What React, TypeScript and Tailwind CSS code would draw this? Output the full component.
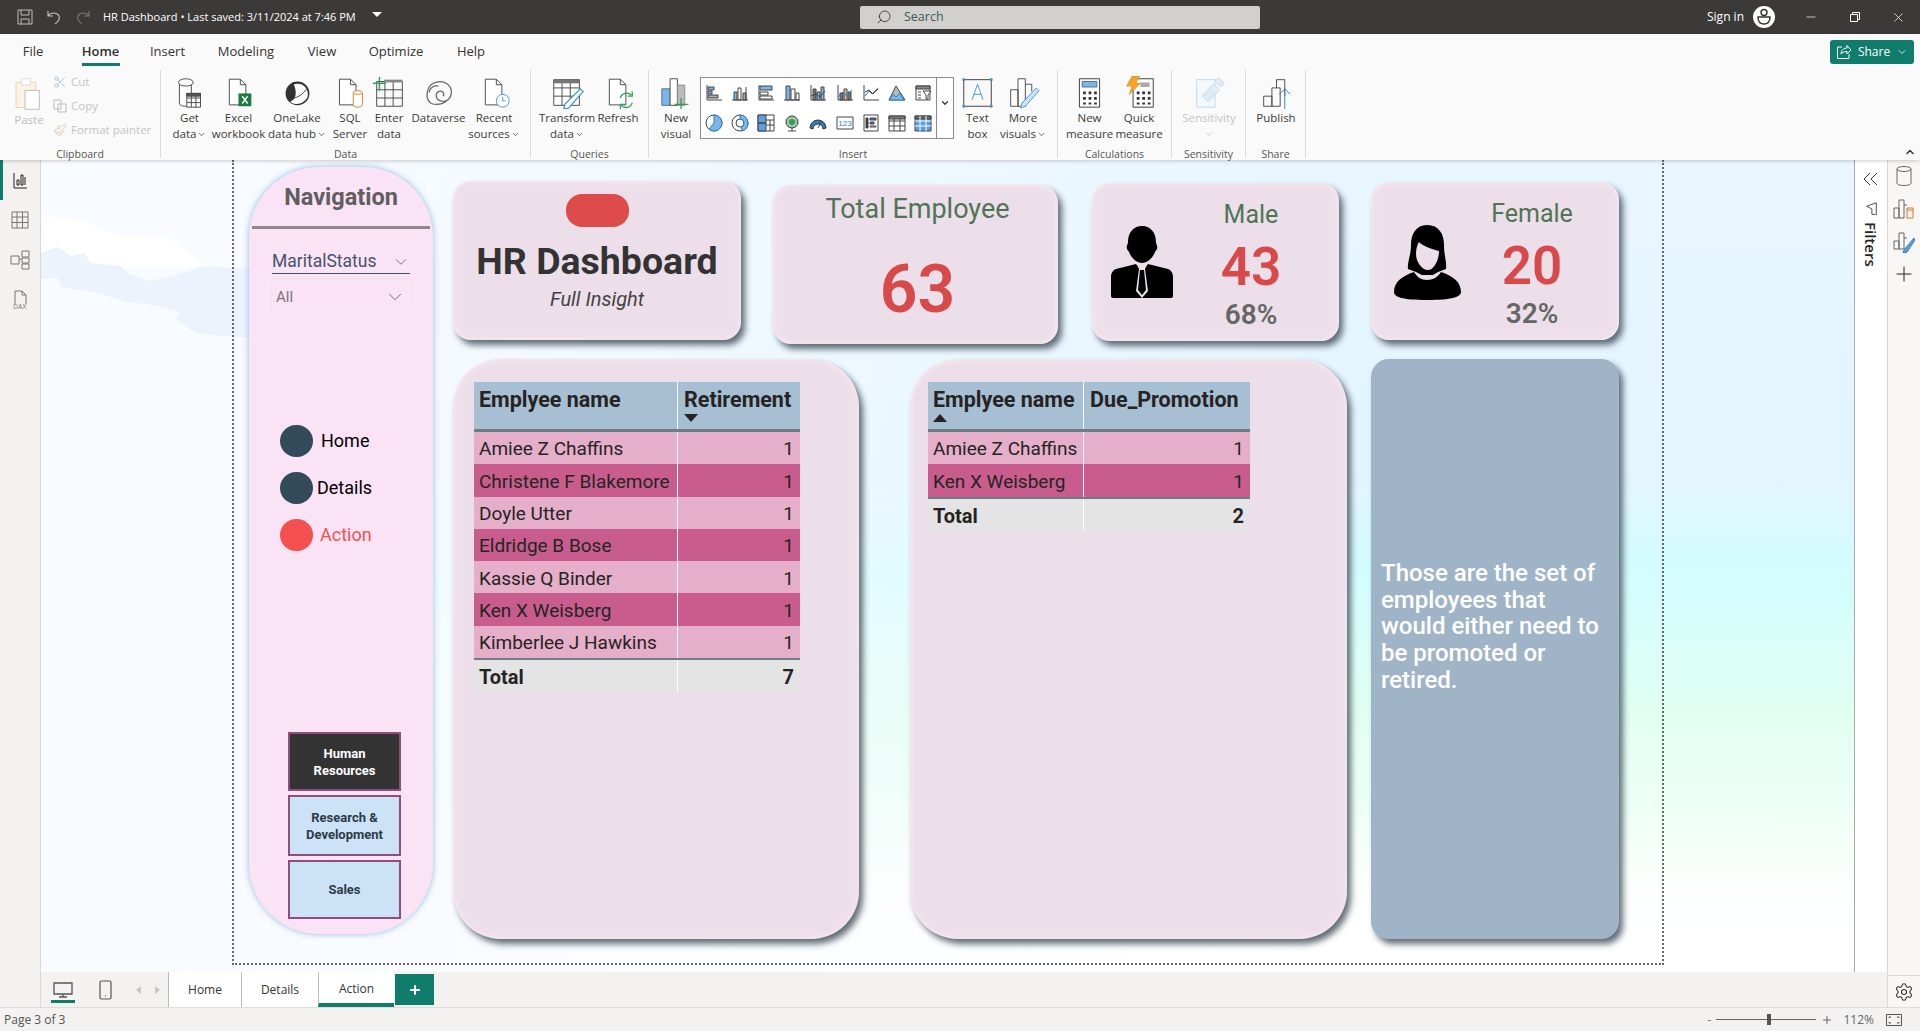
import { type FC, type ReactNode } from "react"
import { ChevronDown, ChevronUp, Minus, Paintbrush, Plus, Scissors, Search, Settings, X } from "lucide-react"

const INK = "#444"
const BLUE = "#3f93d6"

const Ico: FC<{ w?: number; h?: number; vb?: string; children: ReactNode; className?: string }> = ({
    w = 33,
    h = 33,
    vb = "0 0 36 36",
    children,
    className,
}) => (
    <svg width={w} height={h} viewBox={vb} fill="none" stroke={INK} strokeWidth="1" className={className}>
        {children}
    </svg>
)

const Doc = () => <path d="M8 3.5h12l6 6v22H8z M20 3.5v6h6" fill="#fff" />

const GetDataIcon = () => (
    <Ico>
        <path d="M7 8v22c0 2 4 3 7 3h6V8" fill="#fff" />
        <ellipse cx="14" cy="7" rx="8" ry="4" fill="#fff" />
        <path d="M15 19h15v15H15z M15 24h15 M15 29h15 M20 19v15 M25 19v15" fill="#fff" />
        <path d="M15 19h15v3H15z" fill="#555" />
    </Ico>
)
const ExcelIcon = () => (
    <Ico>
        <Doc />
        <rect x="18" y="19" width="14" height="14" fill="#1d7a43" stroke="none" />
        <path d="M22 22l6 8 M28 22l-6 8" stroke="#fff" strokeWidth="1.6" />
    </Ico>
)
const OneLakeIcon = () => (
    <Ico>
        <circle cx="18" cy="19" r="13" fill="#333" stroke="none" />
        <path d="M14 9c10-3 17 5 15 14-5 9-14 9-19 5 6-2 8-9 4-19z" fill="#fff" stroke="none" />
        <path d="M8 24c8 2 16-4 20-10" stroke="#333" />
    </Ico>
)
const SqlIcon = () => (
    <Ico>
        <path d="M6 3.5h12l6 6v22H6z M18 3.5v6h6" fill="#fff" />
        <path d="M21 18v13c0 2 3 3 5 3s5-1 5-3V18" stroke="#d9791f" fill="#fff" />
        <ellipse cx="26" cy="18" rx="5" ry="2" stroke="#d9791f" fill="#fff" />
    </Ico>
)
const EnterIcon = () => (
    <Ico>
        <path d="M4 6h28v27H4z M4 15h28 M4 24h28 M13 6v27 M22 6v27" />
        <path d="M12 4h20v3H12z" fill="#888" stroke="none" />
        <path d="M7 1v15 M0 8h14" stroke="#2f9e57" strokeWidth="1.6" />
    </Ico>
)
const DataverseIcon = () => (
    <Ico>
        <path d="M10 30C3 25 4 10 15 7c9-3 18 3 17 12-1 7-7 10-12 8-5-1-6-8-2-10 4-2 7 2 5 5" strokeWidth="1.4" stroke="#666" />
        <path d="M10 30c6 2 12 1 17-3M8 18c0-5 5-8 10-7" strokeWidth="1.4" stroke="#666" />
    </Ico>
)
const RecentIcon = () => (
    <Ico>
        <Doc />
        <circle cx="27" cy="27" r="7" stroke={BLUE} fill="#fff" />
        <path d="M27 23v4h3" stroke={BLUE} />
    </Ico>
)
const TransformIcon = () => (
    <Ico>
        <path d="M3 4h28v28H3z M3 13h28 M3 22h28 M12 4v28 M21 4v28" fill="#fff" />
        <path d="M3 4h28v4H3z" fill="#777" stroke="none" />
        <path d="M32 14l3 3-16 18-5 1 1-5z" fill="#fff" stroke={BLUE} strokeWidth="1.4" />
    </Ico>
)
const RefreshIcon = () => (
    <Ico>
        <Doc />
        <path d="M20 24a7 7 0 0 1 12-3 M33 29a7 7 0 0 1-12 3" stroke="#2f9e57" strokeWidth="1.4" fill="none" />
        <path d="M33 17v5h-5 M20 36v-5h5" stroke="#2f9e57" strokeWidth="1.4" />
    </Ico>
)
const NewVisualIcon = () => (
    <Ico>
        <path d="M2 14h9v18H2z" fill="#7db5e8" stroke="#3b6e9a" />
        <path d="M11 3h8v29h-8z" fill="#fff" />
        <path d="M19 10h8v22h-8z" fill="#bbb" stroke="#888" />
        <path d="M23 24v14 M16 31h15" stroke="#2f9e57" strokeWidth="1.4" />
    </Ico>
)
const TextBoxIcon = () => (
    <Ico>
        <path d="M3 4h30v29H3z" stroke="#333" />
        <path d="M2 3h2v2H2z M32 3h2v2h-2z M2 32h2v2H2z M32 32h2v2h-2z" fill={BLUE} stroke={BLUE} />
        <path d="M12 26l6-17 6 17 M14 20h8" stroke={BLUE} />
    </Ico>
)
const MoreVisualsIcon = () => (
    <Ico>
        <path d="M4 15h8v18H4z M12 3h8v30h-8z M20 9h7v8" fill="#fff" />
        <path d="M32 13l3 3-15 17-5 2 1-5z" fill="#cfe3f5" stroke={BLUE} />
    </Ico>
)
const MeasureIcon = () => (
    <Ico>
        <path d="M7 3h22v31H7z" fill="#fff" stroke="#333" />
        <path d="M10 6h16v6H10z" fill="#7db5e8" stroke="#3b6e9a" />
        <path d="M11 17h3v3h-3z M17 17h3v3h-3z M23 17h3v3h-3z M11 23h3v3h-3z M17 23h3v3h-3z M23 23h3v3h-3z M11 29h3v2h-3z M17 29h3v2h-3z M23 29h3v2h-3z" fill="#333" stroke="none" />
    </Ico>
)
const QuickIcon = () => (
    <Ico>
        <path d="M11 3h22v31H11z" fill="#fff" stroke="#333" />
        <path d="M19 7h10v5H19z" fill="#aaa" stroke="none" />
        <path d="M15 17h3v3h-3z M21 17h3v3h-3z M27 17h3v3h-3z M15 23h3v3h-3z M21 23h3v3h-3z M27 23h3v3h-3z M15 29h3v2h-3z M21 29h3v2h-3z M27 29h3v2h-3z" fill="#333" stroke="none" />
        <path d="M10 0h8l-4 8h5L7 20l3-9H4z" fill="#f5a623" stroke="#c9761b" strokeWidth=".6" />
    </Ico>
)
const SensitivityIcon = () => (
    <Ico>
        <path d="M4 4h20v30H4z" stroke="#bcd8ec" fill="#f3f8fc" />
        <path d="M10 22l12-13 7 6-12 13z M24 6l4-4 6 6-4 4z" stroke="#bcd8ec" fill="#e3eff8" />
        <path d="M13 22l8-8 M16 25l8-8" stroke="#bcd8ec" />
    </Ico>
)
const PublishIcon = () => (
    <Ico>
        <path d="M4 22h9v11H4z M13 13h9v20h-9z M18 13V4h9v18" fill="#fafafa" />
        <path d="M27 14v22 M21 20l6-6 6 6" stroke="#2c7fc0" />
    </Ico>
)
const PasteIcon = () => (
    <Ico w={33} h={36} vb="0 0 36 40">
        <path d="M3 7h22v28H3z" stroke="#f3cf9f" fill="#fdf3e6" />
        <path d="M9 3h10v7H9z" stroke="#d8d8d8" fill="#fff" />
        <path d="M13 16h16v21H13z" stroke="#b9b9b9" fill="#fff" />
    </Ico>
)

const gallery: ReactNode[] = [
    <><path d="M2 1v15h15" /><path d="M3 3h6v3H3z" fill="#7db5e8" /><path d="M3 7h4v3H3z" fill="#7db5e8" /><path d="M3 11h10v3H3z" fill="#aaa" /></>,
    <><path d="M1 16h16" /><path d="M3 8h3v8H3z" fill="#7db5e8" /><path d="M7 4h3v12H7z" /><path d="M12 9h3v7h-3z" fill="#aaa" /><path d="M15 3v13" /></>,
    <><path d="M2 1v15h15" /><path d="M3 2h12v4H3z" fill="#7db5e8" /><path d="M3 8h8v3H3z" /><path d="M3 12h12v3H3z" /></>,
    <><path d="M1 16h16" /><path d="M3 2h4v14H3z" fill="#7db5e8" /><path d="M8 5h4v11H8z" /><path d="M13 9h3v7h-3z" /></>,
    <><path d="M2 1v15h15" /><path d="M4 5h3v11H4z" fill="#777" /><path d="M8 8h3v8H8z" fill="#7db5e8" /><path d="M12 3h3v13h-3z" fill="#7db5e8" /><path d="M2 12l5-2 4 3 5-6" /></>,
    <><path d="M2 1v15h15" /><path d="M4 9h3v7H4z" fill="#777" /><path d="M8 5h3v11H8z" fill="#e2b8a0" /><path d="M12 8h3v8h-3z" fill="#777" /><path d="M2 13l5-5 4 4 5-6" stroke="#2c7fc0" /></>,
    <><path d="M2 1v15h15" /><path d="M3 12l4-5 3 3 6-6" stroke="#2c7fc0" /><path d="M3 8l4-2 4 4 5-5" /></>,
    <><path d="M8 2l-7 14h16z" fill="#bbb" /><path d="M1 16l4-6 3 3 4-4 4 7z" fill="#7db5e8" stroke="#2c7fc0" /></>,
    <><path d="M2 2h14v14H2z" /><path d="M2 2h14v3H2z" fill="#888" /><path d="M9 7h8l-3 4v4h-2v-4z" fill="#fff" /><path d="M4 8h3 M4 11h3 M4 14h3" /></>,
    <><circle cx="9" cy="9" r="8" fill="#fff" /><path d="M9 1a8 8 0 0 1 0 16 8 8 0 0 1-5-2l5-6z" fill="#7db5e8" stroke="#2c7fc0" /></>,
    <><circle cx="9" cy="9" r="8" /><circle cx="9" cy="9" r="4" /><path d="M9 1a8 8 0 0 1 8 8 8 8 0 0 1-6 8l-1-4a4 4 0 0 0 3-4 4 4 0 0 0-4-4z" fill="#7db5e8" stroke="#2c7fc0" /></>,
    <><path d="M1 1h16v16H1z" /><path d="M1 1h8v8H1z M1 9h8v8H1z" fill="#5b9fe0" /><path d="M9 6h8 M13 6v11 M9 11h8" /></>,
    <><circle cx="9" cy="8" r="6" fill="#a7c8a7" stroke="#333" /><circle cx="9" cy="8" r="3" fill="#2f9e57" stroke="none" /><path d="M9 14v3 M5 17h8" /></>,
    <><path d="M1 14a8 8 0 0 1 16 0l-3 1a5 5 0 0 0-10 0z" fill="#2c7fc0" stroke="#333" /><path d="M9 14l3-6" /></>,
    <><path d="M1 3h16v12H1z" /><text x="9" y="12" textAnchor="middle" fontSize="8" fill="#2c7fc0" stroke="none" fontFamily="Liberation Sans">123</text></>,
    <><path d="M2 1h14v16H2z" /><path d="M4 4h2v10H4z" fill="#333" /><path d="M8 4h6v2H8z" fill="#2c7fc0" /><path d="M8 8h4v2H8z" fill="#2c7fc0" /><path d="M8 12h6v1H8z" /></>,
    <><path d="M1 2h16v15H1z M1 7h16 M1 12h16 M6 2v15 M12 2v15" /><path d="M1 2h16v3H1z" fill="#777" /></>,
    <><path d="M1 2h16v15H1z" fill="#5b9fe0" /><path d="M1 2h16v3H1z" fill="#666" /><path d="M1 7h16 M1 12h16 M6 2v15 M12 2v15" stroke="#fff" /></>,
]

interface RibbonBtnProps {
    icon: ReactNode
    lines: string[]
    width: string
    caret?: boolean
}

const RibbonBtn: FC<RibbonBtnProps> = ({ icon, lines, width, caret }) => (
    <div className={`flex flex-col items-center text-[11.5px] leading-[16px] text-[#3b3a39] ${width}`}>
        <div className="flex h-[33px] items-center justify-center">{icon}</div>
        <div className="mt-[1px] text-center whitespace-nowrap">
            {lines.map((l, i) => (
                <div key={l}>
                    {l}
                    {caret && i === lines.length - 1 && <ChevronDown className="ml-[1px] inline h-[9px] w-[9px]" strokeWidth={2} />}
                </div>
            ))}
        </div>
    </div>
)

const RibbonGroup: FC<{ label: string; width: string; pad: string; children: ReactNode }> = ({ label, width, pad, children }) => (
    <div className={`relative flex h-[88px] shrink-0 border-r border-[#dcdcdc] pt-[6px] ${width} ${pad}`}>
        {children}
        <div className="absolute inset-x-0 bottom-[-3px] text-center text-[10.5px] leading-[14px] text-[#555]">{label}</div>
    </div>
)

const TitleBar = () => (
    <div className="relative flex h-[34px] shrink-0 items-center bg-[#3b3a39] text-[11px] text-white">
        <svg width="18" height="18" viewBox="0 0 18 18" fill="none" stroke="#bdbdbd" className="ml-[16px]">
            <path d="M2 2h14v14H2z M5 2v5h8V2 M5 16v-5h8v5" />
        </svg>
        <svg width="18" height="18" viewBox="0 0 18 18" fill="none" stroke="#bdbdbd" strokeWidth="1.2" className="ml-[11px]">
            <path d="M3 3v5h5 M3 8c3-4 9-4 11 0 1 3-1 6-4 8" />
        </svg>
        <svg width="18" height="18" viewBox="0 0 18 18" fill="none" stroke="#777" strokeWidth="1.2" className="ml-[11px]">
            <path d="M15 3v5h-5 M15 8c-3-4-9-4-11 0-1 3 1 6 4 8" />
        </svg>
        <span className="ml-[11px] w-[263px] whitespace-nowrap">HR Dashboard • Last saved: 3/11/2024 at 7:46 PM</span>
        <span className="mb-[5px] ml-[6px] h-0 w-0 border-x-[5px] border-t-[5px] border-x-transparent border-t-white" />
        <div className="ml-[478px] flex h-[23px] w-[400px] items-center rounded-[2px] bg-[#d2d0ce] pl-[16px] text-[#3c5a55]">
            <Search className="h-[16px] w-[16px] -scale-x-100 text-[#333]" strokeWidth={1.3} />
            <span className="ml-[12px] text-[12.5px]">Search</span>
        </div>
        <span className="ml-[447px] text-[12px] whitespace-nowrap">Sign in</span>
        <svg width="24" height="24" viewBox="0 0 24 24" className="ml-[8px] shrink-0">
            <circle cx="12" cy="12" r="11" fill="#fff" />
            <circle cx="12" cy="7.5" r="3" fill="none" stroke="#333" strokeWidth="1.4" />
            <path d="M6 12h12c0 5-2.5 7-6 7s-6-2-6-7z" fill="none" stroke="#333" strokeWidth="1.4" />
        </svg>
        <Minus className="ml-[28px] h-[14px] w-[14px] shrink-0" strokeWidth={1.2} />
        <svg width="12" height="12" viewBox="0 0 12 12" fill="none" stroke="#fff" className="ml-[31px] shrink-0">
            <path d="M1.5 3.5h7v7h-7z M3.5 3.5v-2h7v7h-2" />
        </svg>
        <X className="ml-[30px] h-[15px] w-[15px] shrink-0" strokeWidth={1.2} />
    </div>
)

const tabs = [
    { name: "File", cls: "w-[66px]" },
    { name: "Home", cls: "w-[69px]" },
    { name: "Insert", cls: "w-[65px]" },
    { name: "Modeling", cls: "w-[92px]" },
    { name: "View", cls: "w-[60px]" },
    { name: "Optimize", cls: "w-[88px]" },
    { name: "Help", cls: "w-[62px]" },
]

const Ribbon = () => (
    <div className="relative z-10 h-[126px] shrink-0 bg-[#fafafa] shadow-[0_1px_4px_rgba(0,0,0,0.2)]">
        <div className="flex h-[36px] items-center text-[13px] text-[#333]">
            {tabs.map((t) => (
                <div key={t.name} className={`relative flex h-full items-center justify-center ${t.cls}`}>
                    <span className={t.name === "Home" ? "font-semibold" : ""}>{t.name}</span>
                    {t.name === "Home" && <span className="absolute bottom-[4px] h-[3px] w-[38px] bg-[#107c6b]" />}
                </div>
            ))}
            <div className="ml-auto mr-[6px] flex h-[24px] w-[84px] items-center justify-center gap-[6px] rounded-[3px] bg-[#107c6b] text-[12px] text-white">
                <svg width="16" height="16" viewBox="0 0 16 16" fill="none" stroke="#fff">
                    <path d="M6 3H1.5v11.5H13V10 M5 10c0-4 3-6 6-6V1.5L15 6l-4 4V7.5c-3 0-5 1-6 2.5z" />
                </svg>
                Share
                <ChevronDown className="h-[12px] w-[12px]" strokeWidth={1.5} />
            </div>
        </div>
        <div className="flex">
            <RibbonGroup label="Clipboard" width="w-[161px]" pad="pl-[10px]">
                <div className="flex w-[38px] flex-col items-center text-[11.5px] leading-[16px] text-[#bdbdbd]">
                    <PasteIcon />
                    <span>Paste</span>
                </div>
                <div className="ml-[5px] mt-[-3px] flex flex-col gap-[6px] text-[11.5px] leading-[18px] text-[#c4c4c4]">
                    <div className="flex items-center gap-[4px]"><Scissors className="h-[14px] w-[14px] text-[#9ab5cc]" strokeWidth={1.2} />Cut</div>
                    <div className="flex items-center gap-[4px]">
                        <svg width="14" height="14" viewBox="0 0 14 14" fill="none" stroke="#bbb"><path d="M1 1h7v9H1z M5 5h8v8H5z" /></svg>
                        Copy
                    </div>
                    <div className="flex items-center gap-[4px]">
                        <Paintbrush className="h-[14px] w-[14px] text-[#d8b89a]" strokeWidth={1.2} />
                        Format painter
                    </div>
                </div>
            </RibbonGroup>
            <RibbonGroup label="Data" width="w-[370px]" pad="pl-[4px]">
                <RibbonBtn icon={<GetDataIcon />} lines={["Get", "data"]} width="w-[49px]" caret />
                <RibbonBtn icon={<ExcelIcon />} lines={["Excel", "workbook"]} width="w-[49px]" />
                <RibbonBtn icon={<OneLakeIcon />} lines={["OneLake", "data hub"]} width="w-[68px]" caret />
                <RibbonBtn icon={<SqlIcon />} lines={["SQL", "Server"]} width="w-[38px]" />
                <RibbonBtn icon={<EnterIcon />} lines={["Enter", "data"]} width="w-[40px]" />
                <RibbonBtn icon={<DataverseIcon />} lines={["Dataverse"]} width="w-[59px]" />
                <RibbonBtn icon={<RecentIcon />} lines={["Recent", "sources"]} width="w-[52px]" caret />
            </RibbonGroup>
            <RibbonGroup label="Queries" width="w-[118px]" pad="pl-[10px]">
                <RibbonBtn icon={<TransformIcon />} lines={["Transform", "data"]} width="w-[52px]" caret />
                <RibbonBtn icon={<RefreshIcon />} lines={["Refresh"]} width="w-[50px]" />
            </RibbonGroup>
            <RibbonGroup label="Insert" width="w-[409px]" pad="pl-[4px]">
                <RibbonBtn icon={<NewVisualIcon />} lines={["New", "visual"]} width="w-[46px]" />
                <div className="ml-[1px] mt-[1px] flex h-[62px] w-[254px] border border-[#8a8a8a] bg-white">
                    <div className="grid w-[236px] grid-cols-9 items-center justify-items-center border-r border-[#8a8a8a]">
                        {gallery.map((g, i) => (
                            <Ico key={i} w={18} h={18} vb="0 0 18 18" className="overflow-visible">{g}</Ico>
                        ))}
                    </div>
                    <div className="flex flex-1 items-start justify-center pt-[20px]">
                        <ChevronDown className="h-[10px] w-[10px] text-[#333]" strokeWidth={3} />
                    </div>
                </div>
                <div className="ml-[4px] flex">
                    <RibbonBtn icon={<TextBoxIcon />} lines={["Text", "box"]} width="w-[39px]" />
                    <RibbonBtn icon={<MoreVisualsIcon />} lines={["More", "visuals"]} width="w-[52px]" caret />
                </div>
            </RibbonGroup>
            <RibbonGroup label="Calculations" width="w-[114px]" pad="pl-[6px]">
                <RibbonBtn icon={<MeasureIcon />} lines={["New", "measure"]} width="w-[51px]" />
                <RibbonBtn icon={<QuickIcon />} lines={["Quick", "measure"]} width="w-[48px]" />
            </RibbonGroup>
            <RibbonGroup label="Sensitivity" width="w-[74px]" pad="pl-[3px]">
                <div className="flex w-[68px] flex-col items-center text-[11.5px] leading-[16px] text-[#c4c4c4]">
                    <div className="flex h-[33px] items-center"><SensitivityIcon /></div>
                    <span className="mt-[1px]">Sensitivity</span>
                    <ChevronDown className="mt-[3px] h-[10px] w-[10px]" />
                </div>
            </RibbonGroup>
            <RibbonGroup label="Share" width="w-[60px]" pad="pl-[5px]">
                <RibbonBtn icon={<PublishIcon />} lines={["Publish"]} width="w-[50px]" />
            </RibbonGroup>
            <div className="ml-auto mr-[4px] mt-[76px]">
                <ChevronUp className="h-[12px] w-[12px] text-[#333]" strokeWidth={3} />
            </div>
        </div>
    </div>
)

const LeftRail = () => (
    <div className="relative flex w-[41px] shrink-0 flex-col items-center gap-[20px] border-r border-[#d8d8d8] bg-[#f3f2f1] pt-[10px]">
        <span className="absolute left-0 top-0 h-[40px] w-[3px] bg-[#107c6b]" />
        <svg width="20" height="20" viewBox="0 0 20 20" fill="none" stroke="#222">
            <path d="M4 3v15h13 M7 10v5h2v-5z M11 5v10h2V5z M15 7v8" />
        </svg>
        <svg width="20" height="20" viewBox="0 0 20 20" fill="none" stroke="#777">
            <path d="M2 2h16v16H2z M2 7h16 M2 12.5h16 M7 2v16 M12.5 2v16" />
        </svg>
        <svg width="20" height="20" viewBox="0 0 20 20" fill="none" stroke="#777">
            <path d="M1 6h8v8H1z M12 1h7v6h-7z M12 8h7v5h-7z M12 14h7v5h-7z M9 9h3" />
        </svg>
        <svg width="20" height="20" viewBox="0 0 20 20" fill="none" stroke="#777">
            <path d="M5 14V1h7l4 4v9 M12 1v4h4" />
            <text x="10" y="19" textAnchor="middle" fontSize="6.5" fill="#777" stroke="none" fontFamily="Liberation Sans">DAX</text>
        </svg>
    </div>
)

const NavDot: FC<{ label: string; color: string; text: string; gap: string }> = ({ label, color, text, gap }) => (
    <div className="flex items-center pl-[31px]">
        <span className={`h-[32px] w-[33px] rounded-full ${color}`} />
        <span className={`mb-[2px] text-[18px] ${text} ${gap}`}>{label}</span>
    </div>
)

const Navigation = () => (
    <div className="mt-[7px] flex h-[767px] w-[184px] shrink-0 flex-col rounded-[70px] bg-[#fbe3f6] font-['Roboto',sans-serif] shadow-[0_0_6px_rgba(120,170,215,0.8)]">
        <div className="mt-[14px] text-center text-[23.5px] leading-[32px] font-bold text-[#605e5e]">Navigation</div>
        <div className="mx-[3px] mt-[13px] h-[3px] bg-[#8b8a8b]" />
        <div className="mx-[23px] mt-[21px] flex h-[24px] items-center justify-between border-b border-[#44546a] text-[17.5px] text-[#44546a]">
            MaritalStatus
            <ChevronDown className="h-[18px] w-[18px]" strokeWidth={1} />
        </div>
        <div className="mx-[21px] mt-[8px] flex h-[30px] items-center justify-between border border-[#efe2ec] px-[5px] text-[15px] text-[#777]">
            All
            <ChevronDown className="h-[22px] w-[22px] text-[#666]" strokeWidth={1} />
        </div>
        <div className="mt-[113px] flex flex-col gap-[15px]">
            <NavDot label="Home" color="bg-[#334a5a]" text="text-black" gap="ml-[8px]" />
            <NavDot label="Details" color="bg-[#334a5a]" text="text-black" gap="ml-[4px]" />
            <NavDot label="Action" color="bg-[#f55050]" text="text-[#f55050]" gap="ml-[7px]" />
        </div>
        <div className="ml-[39px] mt-[181px] flex w-[113px] flex-col gap-[4px] text-center text-[13px] leading-[17px] font-bold">
            <div className="flex h-[59px] items-center justify-center border-2 border-[#8e4f7e] bg-[#333] text-white">Human<br />Resources</div>
            <div className="flex h-[61px] items-center justify-center border-2 border-[#8e4f7e] bg-[#cbe2f7] text-[#2f3b45]">Research &<br />Development</div>
            <div className="flex h-[59px] items-center justify-center border-2 border-[#8e4f7e] bg-[#cbe2f7] text-[#2f3b45]">Sales</div>
        </div>
    </div>
)

const cardCls = "bg-[#ecdfe9] shadow-[4px_5px_6px_rgba(60,75,85,0.8),inset_0_0_6px_rgba(255,240,250,0.9)]"

const ManIcon = () => (
    <svg width="62" height="72" viewBox="0 0 62 72" fill="#000">
        <path d="M31 0c9 0 14 7 14 16 0 3 2 3 1 7-1 2-2 2-2 3-2 6-8 11-13 11s-11-5-13-11c0-1-1-1-2-3-1-4 1-4 1-7 0-9 5-16 14-16z" />
        <path d="M25 38l-20 5c-3 1-5 4-5 8v19c0 1 1 2 2 2h58c1 0 2-1 2-2V51c0-4-2-7-5-8l-20-5-3 4h-6z" />
        <path d="M26 38h10l-2 5 3 22-6 7-6-7 3-22z" fill="#ecdfe9" />
        <path d="M29 44h4l2 20-4 5-4-5z" />
    </svg>
)

const WomanIcon = () => (
    <svg width="67" height="75" viewBox="0 0 67 75" fill="#000">
        <path d="M33 0C45 0 50 9 50 20c0 10 3 18 2 24l-8 3-5 3H28l-6-3-8-3c-1-6 3-14 3-24C17 9 22 0 33 0z" />
        <path d="M25 17c4 4 10 6 20 9 0 9-5 19-11 19s-12-8-12-16c0-5 1-9 3-12z" fill="#ecdfe9" />
        <path d="M20 47c-12 4-20 10-20 20 0 5 8 8 33 8s34-3 34-8c0-10-8-16-20-20-3 5-8 8-14 8s-10-3-13-8z" />
    </svg>
)

const GenderCard: FC<{ label: string; value: string; pct: string; icon: ReactNode; cls: string; shift: string; pad: string }> = ({ label, value, pct, icon, cls, shift, pad }) => (
    <div className={`flex rounded-[18px] ${cardCls} ${cls}`}>
        <div className={`flex w-[92px] shrink-0 items-center justify-center ${shift}`}>{icon}</div>
        <div className={`flex flex-1 flex-col items-center pt-[15px] ${pad}`}>
            <div className="text-[25px] leading-[34px] text-[#4f7556]">{label}</div>
            <div className="mt-[5px] text-[53px] leading-[60px] font-semibold text-[#d84a4a]">{value}</div>
            <div className="mt-[1px] text-[28px] leading-[34px] font-semibold text-[#666]">{pct}</div>
        </div>
    </div>
)

interface TableProps {
    first: string
    second: string
    widths: string
    sort: "up" | "down"
    sortOnSecond?: boolean
    rows: string[]
    total: string
}

const DataTable: FC<TableProps> = ({ first, second, widths, sort, sortOnSecond, rows, total }) => {
    const arrow = (
        <span className={`mt-[1px] block h-0 w-0 border-x-[7px] border-x-transparent ${sort === "up" ? "border-b-[8px] border-b-[#252423]" : "border-t-[8px] border-t-[#252423]"}`} />
    )
    return (
        <div className="text-[19px] text-[#252423]">
            <div className={`grid h-[50px] border-b-[3px] border-[#6f7d87] bg-[#a7bfd2] text-[21.5px] font-bold ${widths}`}>
                <div className="border-r border-white pl-[5px] pt-[5px] leading-[26px]">
                    {first}
                    {!sortOnSecond && arrow}
                </div>
                <div className="pl-[6px] pt-[5px] leading-[26px]">
                    {second}
                    {sortOnSecond && arrow}
                </div>
            </div>
            {rows.map((r, i) => (
                <div key={r} className={`grid h-[32.3px] items-center ${widths} ${i % 2 === 0 ? "bg-[#e5afc9]" : "bg-[#c85d8d]"}`}>
                    <div className="flex h-full items-center whitespace-nowrap border-r border-white pl-[5px] pt-[3px]">{r}</div>
                    <div className="pr-[6px] pt-[3px] text-right">1</div>
                </div>
            ))}
            <div className={`grid h-[33px] items-center border-t-[2px] border-[#6f7d87] bg-[#e4e4e4] text-[20px] font-bold ${widths}`}>
                <div className="flex h-full items-center border-r border-white pl-[5px] pt-[2px]">Total</div>
                <div className="pr-[6px] pt-[2px] text-right">{total}</div>
            </div>
        </div>
    )
}

const ReportPage = () => (
    <div className="relative ml-[191px] flex h-[805px] w-[1432px] border-x-2 border-b-2 border-dotted border-[#666] pl-[15px]">
        <Navigation />
        <div className="ml-[20px] flex flex-col font-['Roboto',sans-serif]">
            <div className="flex h-[199px] items-start">
                <div className={`mt-[21px] flex h-[159px] w-[288px] flex-col items-center rounded-[18px] ${cardCls}`}>
                    <span className="mt-[13px] h-[33px] w-[63px] rounded-[16px] bg-[#de4b4b]" />
                    <div className="mt-[10px] text-[37.5px] leading-[48px] font-bold text-[#333]">HR Dashboard</div>
                    <div className="mt-[1px] text-[20px] leading-[26px] text-[#444] italic">Full Insight</div>
                </div>
                <div className={`ml-[32px] mt-[25px] flex h-[159px] w-[285px] flex-col items-center rounded-[18px] pl-[4px] ${cardCls}`}>
                    <div className="mt-[7px] text-[27px] leading-[34px] text-[#4f7556]">Total Employee</div>
                    <div className="mt-[24px] text-[66px] leading-[80px] font-semibold text-[#d84a4a]">63</div>
                </div>
                <GenderCard label="Male" value="43" pct="68%" icon={<ManIcon />} cls="ml-[34px] mt-[23px] h-[158px] w-[247px]" shift="pl-[8px]" pad="pr-[21px]" />
                <GenderCard label="Female" value="20" pct="32%" icon={<WomanIcon />} cls="ml-[32px] mt-[22px] h-[158px] w-[248px]" shift="pl-[20px] pt-[3px]" pad="pr-[18px]" />
            </div>
            <div className="flex h-[580px]">
                <div className={`w-[406px] rounded-[48px] pl-[21px] pt-[23px] ${cardCls}`}>
                    <div className="w-[326px]">
                        <DataTable
                            first="Emplyee name"
                            second="Retirement"
                            widths="grid-cols-[204px_122px]"
                            sort="down"
                            sortOnSecond
                            rows={["Amiee Z Chaffins", "Christene F Blakemore", "Doyle Utter", "Eldridge B Bose", "Kassie Q Binder", "Ken X Weisberg", "Kimberlee J Hawkins"]}
                            total="7"
                        />
                    </div>
                </div>
                <div className={`ml-[51px] w-[437px] rounded-[48px] pl-[18px] pt-[23px] ${cardCls}`}>
                    <div className="w-[322px]">
                        <DataTable
                            first="Emplyee name"
                            second="Due_Promotion"
                            widths="grid-cols-[156px_166px]"
                            sort="up"
                            rows={["Amiee Z Chaffins", "Ken X Weisberg"]}
                            total="2"
                        />
                    </div>
                </div>
                <div className="ml-[24px] w-[248px] rounded-[18px] bg-[#9fb4c6] pl-[10px] pr-[10px] pt-[201px] text-[24px] leading-[26.7px] font-medium text-white shadow-[4px_5px_6px_rgba(60,75,85,0.8)]">
                    Those are the set of employees that would either need to be promoted or retired.
                </div>
            </div>
        </div>
    </div>
)

const FiltersPane = () => (
    <div className="flex w-[33px] shrink-0 flex-col items-center border-l border-[#aaa] bg-white pt-[11px]">
        <svg width="16" height="16" viewBox="0 0 16 16" fill="none" stroke="#333">
            <path d="M7 2L1 8l6 6 M14 2L8 8l6 6" />
        </svg>
        <svg width="14" height="14" viewBox="0 0 14 16" fill="none" stroke="#333" className="mt-[14px]">
            <path d="M13 2L2 6l6 3v6l5 1z" />
        </svg>
        <span className="mt-[7px] text-[15px] font-semibold text-[#252423] [writing-mode:vertical-rl]">Filters</span>
    </div>
)

const RightRail = () => (
    <div className="flex w-[33px] shrink-0 flex-col border-l border-[#d8d8d8] bg-[#f8f7f6]">
        <div className="flex flex-1 flex-col items-center gap-[11px] pt-[5px]">
            <svg width="20" height="22" viewBox="0 0 20 22" fill="none" stroke="#666">
                <ellipse cx="10" cy="4" rx="7" ry="2.5" />
                <path d="M3 4v14c0 1.5 3 2.5 7 2.5s7-1 7-2.5V4" />
            </svg>
            <svg width="22" height="22" viewBox="0 0 22 22" fill="none" stroke="#666">
                <path d="M1 10h5v10H1z M6 2h5v18H6z M11 7h3" />
                <path d="M14 10h6v10h-6z M14 12h6" stroke="#d9791f" />
            </svg>
            <svg width="22" height="22" viewBox="0 0 22 22" fill="none" stroke="#666">
                <path d="M1 10h5v8H1z M6 2h5v16H6z M11 7h3" />
                <path d="M21 7l-10 12-1 3 4-1 8-12z" fill="#5b9fe0" stroke="#2c7fc0" />
            </svg>
            <Plus className="mt-[-2px] h-[24px] w-[24px] text-[#222]" strokeWidth={1} />
        </div>
        <div className="flex h-[32px] items-center justify-center border-t border-[#d8d8d8]">
            <Settings className="h-[20px] w-[20px] text-[#333]" strokeWidth={1.3} />
        </div>
    </div>
)

const pages = [
    { name: "Home", cls: "w-[73px]" },
    { name: "Details", cls: "w-[77px]" },
    { name: "Action", cls: "w-[76px] border-b-4 border-b-[#107c6b] pt-[2px]" },
]

const PageTabs = () => (
    <div className="flex h-[35px] shrink-0 items-stretch bg-[#f3f2f1] text-[12px] text-[#333]">
        <div className="relative flex w-[42px] items-center justify-center">
            <svg width="20" height="16" viewBox="0 0 20 16" fill="none" stroke="#555" strokeWidth="1.3" className="ml-[1px]">
                <path d="M1 1h18v11H1z M10 12v3 M6 15h8" />
            </svg>
            <span className="absolute bottom-[4px] left-[10px] h-[3px] w-[24px] bg-[#107c6b]" />
        </div>
        <div className="flex w-[45px] items-center justify-center">
            <svg width="13" height="20" viewBox="0 0 13 20" fill="none" stroke="#555" strokeWidth="1.2">
                <rect x="1" y="1" width="11" height="18" rx="1.5" />
                <path d="M6 16h1" />
            </svg>
        </div>
        <div className="flex w-[40px] items-center justify-center gap-[14px]">
            <span className="h-0 w-0 border-y-[4px] border-r-[5px] border-y-transparent border-r-[#c8c6c4]" />
            <span className="h-0 w-0 border-y-[4px] border-l-[5px] border-y-transparent border-l-[#c8c6c4]" />
        </div>
        {pages.map((p) => (
            <div key={p.name} className={`flex items-center justify-center border-l border-[#bbb] bg-white ${p.cls}`}>
                {p.name}
            </div>
        ))}
        <div className="my-[2px] ml-[1px] flex w-[39px] items-center justify-center bg-[#107c6b]">
            <Plus className="h-[14px] w-[14px] text-white" strokeWidth={3.5} />
        </div>
    </div>
)

const StatusBar = () => (
    <div className="flex h-[24px] shrink-0 items-center border-t border-[#dcdcdc] bg-[#f3f2f1] pl-[4px] text-[12px] text-[#555]">
        Page 3 of 3
        <div className="ml-auto flex items-center pr-[18px]">
            <span className="text-[#777]">-</span>
            <div className="relative ml-[5px] h-[1px] w-[100px] bg-[#666]">
                <span className="absolute left-[51px] top-[-5px] h-[11px] w-[4px] bg-[#555]" />
            </div>
            <Plus className="ml-[5px] h-[12px] w-[12px] text-[#666]" />
            <span className="ml-[10px] text-[#666]">112%</span>
            <svg width="16" height="12" viewBox="0 0 16 12" fill="none" stroke="#555" className="ml-[12px]">
                <path d="M.5.5h15v11H.5z M3 4V3h2 M11 3h2v1 M13 8v1h-2 M5 9H3V8" />
            </svg>
        </div>
    </div>
)

// watercolour patch in the top-left of the report wallpaper
const WallpaperCloud = () => (
    <svg width="210" height="180" viewBox="0 0 210 180" className="absolute left-0 top-0">
        <path d="M0 54L18 58 50 63 58 70 83 76 130 78 143 90 163 106 80 108 0 108z" fill="#ffffff" />
        <path d="M0 93L17 87 30 96 43 93 50 103 80 106 87 114 110 121 133 116 163 106 210 109V178L180 176 155 173 135 160 138 152 113 145 87 142 53 132 20 127 17 118 0 119z" fill="#edf3fd" />
    </svg>
)

const App = () => (
    <div className="flex h-[1031px] w-[1920px] flex-col overflow-hidden bg-[#f3f2f1] font-['Open_Sans',sans-serif]">
        <TitleBar />
        <Ribbon />
        <div className="flex min-h-0 flex-1">
            <LeftRail />
            <div className="flex min-w-0 flex-1 flex-col">
                <div className="flex min-h-0 flex-1">
                    <div className="relative min-w-0 flex-1 bg-[linear-gradient(90deg,#f8fbff_0%,#f8fbff_12%,rgba(248,251,255,0)_70%),linear-gradient(180deg,rgba(255,255,255,0)_80%,#ffffff_97%),linear-gradient(180deg,#e8f6ff_0%,#e2f5ff_40%,#d2fcff_50%,#e0fff3_67%,#f2fff8_85%,#ffffff_97%)]">
                        <WallpaperCloud />
                        <ReportPage />
                    </div>
                    <FiltersPane />
                </div>
                <PageTabs />
            </div>
            <RightRail />
        </div>
        <StatusBar />
    </div>
)

export default App
